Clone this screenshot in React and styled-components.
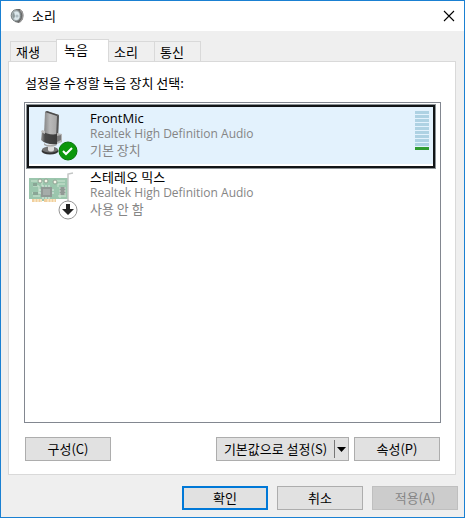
import React, { useState } from 'react';
import styled, { createGlobalStyle } from 'styled-components';

const GlobalStyle = createGlobalStyle`
  *, *::before, *::after { box-sizing: border-box; }
  body {
    margin: 0;
    background: #efefef;
    color: #000;
    font-family: "Noto Sans CJK KR", "Noto Sans", sans-serif;
    font-size: 13px;
    line-height: 16px;
  }
  button { font: inherit; color: inherit; }
`;

const Dialog = styled.main`
  display: flex;
  flex-direction: column;
  min-height: 100vh;
  border: 1px solid #1a80d2;
  background: #efefef;
`;

const TitleBar = styled.header`
  display: flex;
  align-items: center;
  height: 30px;
  padding: 0 9px;
  gap: 7px;
  background: #fff;
`;

const Title = styled.h1`
  flex: 1;
  margin: 0;
  font-size: 13px;
  font-weight: 400;
`;

const CloseButton = styled.button`
  display: flex;
  padding: 0;
  border: 0;
  background: none;
`;

const Content = styled.div`
  display: flex;
  flex: 1;
  flex-direction: column;
  padding: 8px 8px 0 7px;
`;

const TabList = styled.div`
  display: flex;
  align-items: flex-end;
  padding-left: 2px;
`;

const Tab = styled.button`
  width: 46px;
  height: 20px;
  padding: 0 0 0 5px;
  border: 1px solid #d9d9d9;
  border-width: 1px 1px 0 0;
  background: #efefef;
  text-align: left;

  &:first-child { width: 47px; border-left-width: 1px; }

  &[aria-selected='true'] {
    z-index: 1;
    width: 53px;
    height: 23px;
    margin: 0 0 -1px -1px;
    padding: 0 0 3px 7px;
    border-left-width: 1px;
    background: #fff;
  }
`;

const Panel = styled.section`
  display: flex;
  flex: 1;
  flex-direction: column;
  padding: 13px 14px 13px 15px;
  border: 1px solid #d9d9d9;
  background: #fff;
`;

const Prompt = styled.p`
  margin: 0 0 11px 1px;
`;

const DeviceList = styled.ul`
  display: flex;
  flex: 1;
  flex-direction: column;
  margin: 0;
  padding: 2px 5px 2px 2px;
  list-style: none;
  border: 1px solid #828790;
`;

const DeviceRow = styled.li`
  display: flex;
  align-items: flex-start;
  height: 63px;
  padding: 3px 3px 3px 0;
  border: 2px solid ${(p) => (p.$selected ? '#121517' : 'transparent')};
  background: ${(p) => (p.$selected ? '#e3f2fd' : 'transparent')};
  box-shadow: ${(p) => (p.$selected ? 'inset 0 -2px #fff, 0 0 0 1px #8b9296' : 'none')};

  & + & { margin-top: -4px; }
`;

const DeviceIcon = styled.div`
  position: relative;
  flex: none;
  width: 61px;
  height: 51px;
`;

const Badge = styled.svg`
  position: absolute;
  left: 29px;
  bottom: 0;
`;

const DeviceText = styled.div`
  flex: 1;
  padding-top: 1px;
  line-height: 15px;
`;

const DeviceName = styled.div`
  color: #000;
  font-family: "Open Sans", "Noto Sans CJK KR", sans-serif;
`;

const DeviceDetail = styled.div`
  color: #858585;
`;

const Driver = styled(DeviceDetail)`
  font-family: "Open Sans", sans-serif;
  font-size: 12px;
  line-height: 16px;
`;

const Meter = styled.div`
  display: grid;
  gap: 1px;
  width: 14px;
  margin: 1px 1px 0 0;
`;

const Segment = styled.i`
  height: 3px;
  background: ${(p) => (p.$lit ? '#309c30' : '#aed2e3')};
`;

const DeviceActions = styled.div`
  display: flex;
  gap: 5px;
  margin: 14px 1px 0;
`;

const Button = styled.button`
  width: 86px;
  height: 24px;
  padding: 0;
  border: ${(p) => (p.$primary ? '2px solid #0078d7' : '1px solid #adadad')};
  background: #e1e1e1;

  &:disabled {
    border-color: #bfbfbf;
    background: #ccc;
    color: #858585;
  }
`;

const SplitButton = styled.div`
  display: flex;
  align-items: center;
  width: 133px;
  height: 24px;
  margin-left: auto;
  border: 1px solid #adadad;
  background: #e1e1e1;
`;

const SplitMain = styled.button`
  flex: 1;
  padding: 0;
  border: 0;
  background: none;
  white-space: nowrap;
`;

const SplitArrow = styled.button`
  display: grid;
  place-items: center;
  width: 14px;
  height: 18px;
  padding: 0;
  border: 0;
  border-left: 1px solid #777;
  background: none;
`;

const Footer = styled.footer`
  display: flex;
  justify-content: flex-end;
  gap: 9px;
  padding: 11px 6px 7px;
`;

const SpeakerIcon = () => (
  <svg width="15" height="16" viewBox="0 0 15 16" aria-hidden="true">
    <path d="M6 1h4l3 3v7l-4 4-4-1z" fill="#666" />
    <path d="M10 2c4 3 4 8 0 12" fill="none" stroke="#999" strokeWidth="1.5" />
    <ellipse cx="6" cy="7.5" rx="4.8" ry="5.8" fill="#aab3b5" stroke="#777f80" />
    <ellipse cx="6.3" cy="7.8" rx="3.2" ry="4.3" fill="#dce8ec" />
    <path d="M4 4c-2 2-2 5 0 7l1-3z" fill="#8b9798" />
    <circle cx="7" cy="8" r="1.6" fill="#aebcc2" />
  </svg>
);

const CloseIcon = () => (
  <svg width="12" height="12" viewBox="0 0 12 12" aria-hidden="true">
    <path d="m1 1 10 10M11 1 1 11" fill="none" stroke="#000" strokeWidth="1.1" />
  </svg>
);

const MicrophoneIcon = () => (
  <svg width="46" height="46" viewBox="0 0 46 46" aria-hidden="true">
    <defs>
      <linearGradient id="micHead">
        <stop stopColor="#858585" />
        <stop offset=".4" stopColor="#b9b9b9" />
        <stop offset="1" stopColor="#a2a2a2" />
      </linearGradient>
      <linearGradient id="micBody">
        <stop stopColor="#999" />
        <stop offset=".25" stopColor="#484848" />
        <stop offset="1" stopColor="#3b3b3b" />
      </linearGradient>
    </defs>
    <ellipse cx="21" cy="41" rx="8.5" ry="3.5" fill="#343434" />
    <ellipse cx="21" cy="39.5" rx="8" ry="3" fill="#747474" />
    <path d="M19 34h6v6c-1 2-5 2-6 0z" fill="#ddd" />
    <path d="M15 33c3 3 9 3 13 0v2c-3 2-10 2-13 0z" fill="#aaa" />
    <path d="m16 2 2-1 12 4-1 23-14-3z" fill="url(#micHead)" />
    <path d="m16 2 2-1 12 4-2 1z" fill="#4b4b4b" />
    <path d="m28 6 2-1-1 22-2 1z" fill="#565656" />
    <path d="M13 21c4 3 10 4 15 3v10c-5 1-12 0-16-4z" fill="url(#micBody)" />
    <path d="m13 20 3 1v3l-4-2z" fill="#bbb" />
    <path d="m28 23 5 1v8l-5 2z" fill="#b5b5b5" />
    <path d="m28 26 4-1v5l-4 2z" fill="#777" />
  </svg>
);

const SoundCardIcon = () => (
  <svg width="46" height="38" viewBox="0 -4 46 38" aria-hidden="true">
    <g opacity=".66">
      <path d="M0 5h39v21H27v2H4v-2H0z" fill="#68aa83" />
      <path d="M39 29V1l5-1" fill="none" stroke="#a5aaa8" strokeWidth="1.5" />
      <path d="M3 26h10v3H3zm12 0h12v3H15z" fill="#e9b76d" />
      <path d="M6 26v3m3-3v3m3-3v3m7-3v3m3-3v3m3-3v3" stroke="#fff1ce" />
      <path d="M2 8h9m-7 5h6v7H3m8-12h2v5m14-5h9m-7 3h7m-7 12h8M4 23h7m18-12v3m2 8v3" fill="none" stroke="#b7d9bf" />
      <path d="M4 10h4v3H4zm0 9h5v3H4z" fill="#4f7961" />
      <path d="M12 14h11v10H12z" fill="#59655f" />
      <path d="M14 16h7v6h-7z" fill="#78827e" />
      <path d="M14 12v2m3-2v2m3-2v2m-6 10v2m3-2v2m3-2v2m-10-9h2m-2 3h2m11-3h2m-2 3h2" stroke="#d5ddda" />
      <path d="M31 14h5v8h-5z" fill="#59655f" />
      <path d="M30 15h2m-2 3h2m-2 3h2m3-6h2m-2 3h2m-2 3h2" stroke="#afbbb5" />
      <circle cx="11" cy="8" r="2" fill="#f0f3df" stroke="#59745f" />
      <circle cx="17" cy="8" r="2" fill="#f0f3df" stroke="#59745f" />
      <circle cx="26" cy="9" r="2" fill="#edf0db" stroke="#59745f" />
    </g>
  </svg>
);

const StatusBadge = ({ kind }) => (
  <Badge width="20" height="20" viewBox="0 0 20 20" aria-hidden="true">
    {kind === 'default' ? (
      <>
        <circle cx="10" cy="10" r="9" fill="#0b980b" stroke="#08750b" />
        <path d="m5 10 3 3 6-6" fill="none" stroke="#fff" strokeWidth="2" />
      </>
    ) : (
      <>
        <circle cx="10" cy="10" r="9" fill="#fff" stroke="#969696" />
        <path d="M8 4h4v5h4l-6 6-6-6h4z" fill="#242424" />
      </>
    )}
  </Badge>
);

const tabs = ['재생', '녹음', '소리', '통신'];

const devices = [
  { name: 'FrontMic', status: '기본 장치', kind: 'default', Icon: MicrophoneIcon },
  { name: '스테레오 믹스', status: '사용 안 함', kind: 'disabled', Icon: SoundCardIcon },
];

export default function App() {
  const [activeTab, setActiveTab] = useState(1);
  const [selected, setSelected] = useState(0);

  return (
    <>
      <GlobalStyle />
      <Dialog>
        <TitleBar>
          <SpeakerIcon />
          <Title>소리</Title>
          <CloseButton aria-label="닫기"><CloseIcon /></CloseButton>
        </TitleBar>
        <Content>
          <TabList role="tablist">
            {tabs.map((tab, index) => (
              <Tab key={tab} role="tab" aria-selected={index === activeTab} onClick={() => setActiveTab(index)}>
                {tab}
              </Tab>
            ))}
          </TabList>
          <Panel role="tabpanel">
            <Prompt id="device-prompt">설정을 수정할 녹음 장치 선택:</Prompt>
            <DeviceList role="listbox" aria-labelledby="device-prompt">
              {devices.map(({ name, status, kind, Icon }, index) => (
                <DeviceRow
                  key={name}
                  role="option"
                  aria-selected={index === selected}
                  $selected={index === selected}
                  onClick={() => setSelected(index)}
                >
                  <DeviceIcon>
                    <Icon />
                    <StatusBadge kind={kind} />
                  </DeviceIcon>
                  <DeviceText>
                    <DeviceName>{name}</DeviceName>
                    <Driver>Realtek High Definition Audio</Driver>
                    <DeviceDetail>{status}</DeviceDetail>
                  </DeviceText>
                  {kind === 'default' && (
                    <Meter role="img" aria-label="입력 수준">
                      {Array.from({ length: 10 }, (_, i) => <Segment key={i} $lit={i === 9} />)}
                    </Meter>
                  )}
                </DeviceRow>
              ))}
            </DeviceList>
            <DeviceActions>
              <Button>구성(C)</Button>
              <SplitButton>
                <SplitMain>기본값으로 설정(S)</SplitMain>
                <SplitArrow aria-label="기본값 옵션">
                  <svg width="9" height="5" viewBox="0 0 9 5" aria-hidden="true"><path d="M0 0h9L4.5 5z" /></svg>
                </SplitArrow>
              </SplitButton>
              <Button>속성(P)</Button>
            </DeviceActions>
          </Panel>
        </Content>
        <Footer>
          <Button $primary>확인</Button>
          <Button>취소</Button>
          <Button disabled>적용(A)</Button>
        </Footer>
      </Dialog>
    </>
  );
}
